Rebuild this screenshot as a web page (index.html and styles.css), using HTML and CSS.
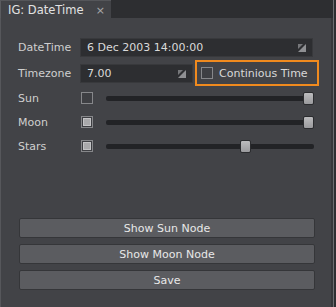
FILE: index.html
```html
<!DOCTYPE html>
<html lang="en">
<head>
  <meta charset="UTF-8" />
  <title>IG: DateTime</title>
  <link rel="stylesheet" href="styles.css">
</head>
<body>
  <div class="window">
    <div class="tabbar">
      <div class="tab">
        <span class="tab-title">IG: DateTime</span>
        <span class="tab-close">&times;</span>
      </div>
    </div>

    <div class="panel">
      <div class="row row-first">
        <label class="label">DateTime</label>
        <div class="field field-wide">
          <span>6 Dec 2003 14:00:00</span>
          <svg class="grip" width="10" height="10" viewBox="0 0 10 10"><polygon points="9,1 9,9 1,9" fill="#8f9093"/><polygon points="1,1 6,1 1,6" fill="#76777a"/></svg>
        </div>
      </div>

      <div class="row row-tz">
        <label class="label">Timezone</label>
        <div class="field field-short">
          <span>7.00</span>
          <svg class="grip" width="10" height="10" viewBox="0 0 10 10"><polygon points="9,1 9,9 1,9" fill="#8f9093"/><polygon points="1,1 6,1 1,6" fill="#76777a"/></svg>
        </div>
        <div class="focus-box">
          <span class="check"></span>
          <span>Continious Time</span>
        </div>
      </div>

      <div class="row row-slider">
        <label class="label">Sun</label>
        <span class="check"></span>
        <div class="track"><span class="thumb" style="left: calc((100% - 11px) * 1)"></span></div>
      </div>

      <div class="row row-slider">
        <label class="label">Moon</label>
        <span class="check checked"></span>
        <div class="track"><span class="thumb" style="left: calc((100% - 11px) * 1)"></span></div>
      </div>

      <div class="row row-slider">
        <label class="label">Stars</label>
        <span class="check checked"></span>
        <div class="track"><span class="thumb" style="left: calc((100% - 11px) * 0.68)"></span></div>
      </div>

      <div class="buttons">
        <button>Show Sun Node</button>
        <button>Show Moon Node</button>
        <button>Save</button>
      </div>
    </div>
  </div>
</body>
</html>
```

FILE: styles.css
```css
body {
  margin: 0;
  padding: 0;
  background: #2d2e31;
  font-family: 'DejaVu Sans', sans-serif;
  font-size: 11px;
  color: #d4d4d4;
}
.window {
  width: 333px;
  height: 307px;
  display: flex;
  flex-direction: column;
  border-right: 1px solid #6c6d70;
}
.tabbar {
  height: 18px;
  display: flex;
  background: #2d2e31;
}
.tab {
  width: 111px;
  background: #424347;
  border-left: 1px solid #5a5b5f;
  border-top: 1px solid #55565a;
  display: flex;
  align-items: center;
  justify-content: space-between;
  padding: 0 6px 0 7px;
  box-sizing: border-box;
}
.tab-title {
  font-size: 11.5px;
  color: #e2e2e2;
}
.tab-close {
  font-size: 11px;
  color: #a8a8a8;
  margin-top: 2px;
}
.panel {
  flex: 1;
  background: #424347;
  border-left: 1px solid #56575b;
  border-right: 2px solid #36373a;
  padding: 20px 17px 0 17px;
}
.row {
  display: flex;
  align-items: center;
}
.row-first {
  height: 19px;
}
.row-tz {
  height: 26px;
  margin-top: 3px;
}
.row-slider {
  height: 24px;
}
.label {
  width: 62px;
  flex-shrink: 0;
  color: #cfcfcf;
}
.field {
  height: 19px;
  box-sizing: border-box;
  background: #2d2e31;
  border: 1px solid #38393c;
  display: flex;
  align-items: center;
  justify-content: space-between;
  padding: 0 5px 0 6px;
  color: #dadada;
  flex-shrink: 0;
}
.field-wide {
  width: 233px;
}
.field-short {
  width: 113px;
}
.grip {
  display: block;
  margin-top: 1px;
}
.focus-box {
  width: 124px;
  height: 26px;
  box-sizing: border-box;
  margin-left: 2px;
  border: 2px solid #f08a1e;
  display: flex;
  align-items: center;
  gap: 6px;
  padding-left: 4px;
  flex-shrink: 0;
  color: #d8d8d8;
}
.check {
  width: 12px;
  height: 12px;
  box-sizing: border-box;
  border: 1px solid #86878a;
  background: #3e3f43;
  flex-shrink: 0;
  display: flex;
  align-items: center;
  justify-content: center;
}
.row-slider .check {
  margin-left: 1px;
}
.check.checked::after {
  content: "";
  width: 6px;
  height: 6px;
  background: #a9a9ab;
  border: 1px solid #c4c4c6;
}
.track {
  position: relative;
  flex: 1;
  height: 5px;
  margin-left: 13px;
  background: #222326;
  border-radius: 2px;
}
.thumb {
  position: absolute;
  top: -4px;
  width: 11px;
  height: 13px;
  box-sizing: border-box;
  background: linear-gradient(#bcbcbe, #9a9a9d);
  border: 1px solid #2b2c2f;
  border-radius: 2px;
}
.buttons {
  margin-top: 60px;
  display: flex;
  flex-direction: column;
  gap: 6px;
}
button {
  height: 20px;
  width: 296px;
  margin-left: 1px;
  background: #5b5c60;
  border: 1px solid #353639;
  border-radius: 2px;
  color: #e8e8e8;
  font-family: 'DejaVu Sans', sans-serif;
  font-size: 11px;
  padding: 0;
}
```
